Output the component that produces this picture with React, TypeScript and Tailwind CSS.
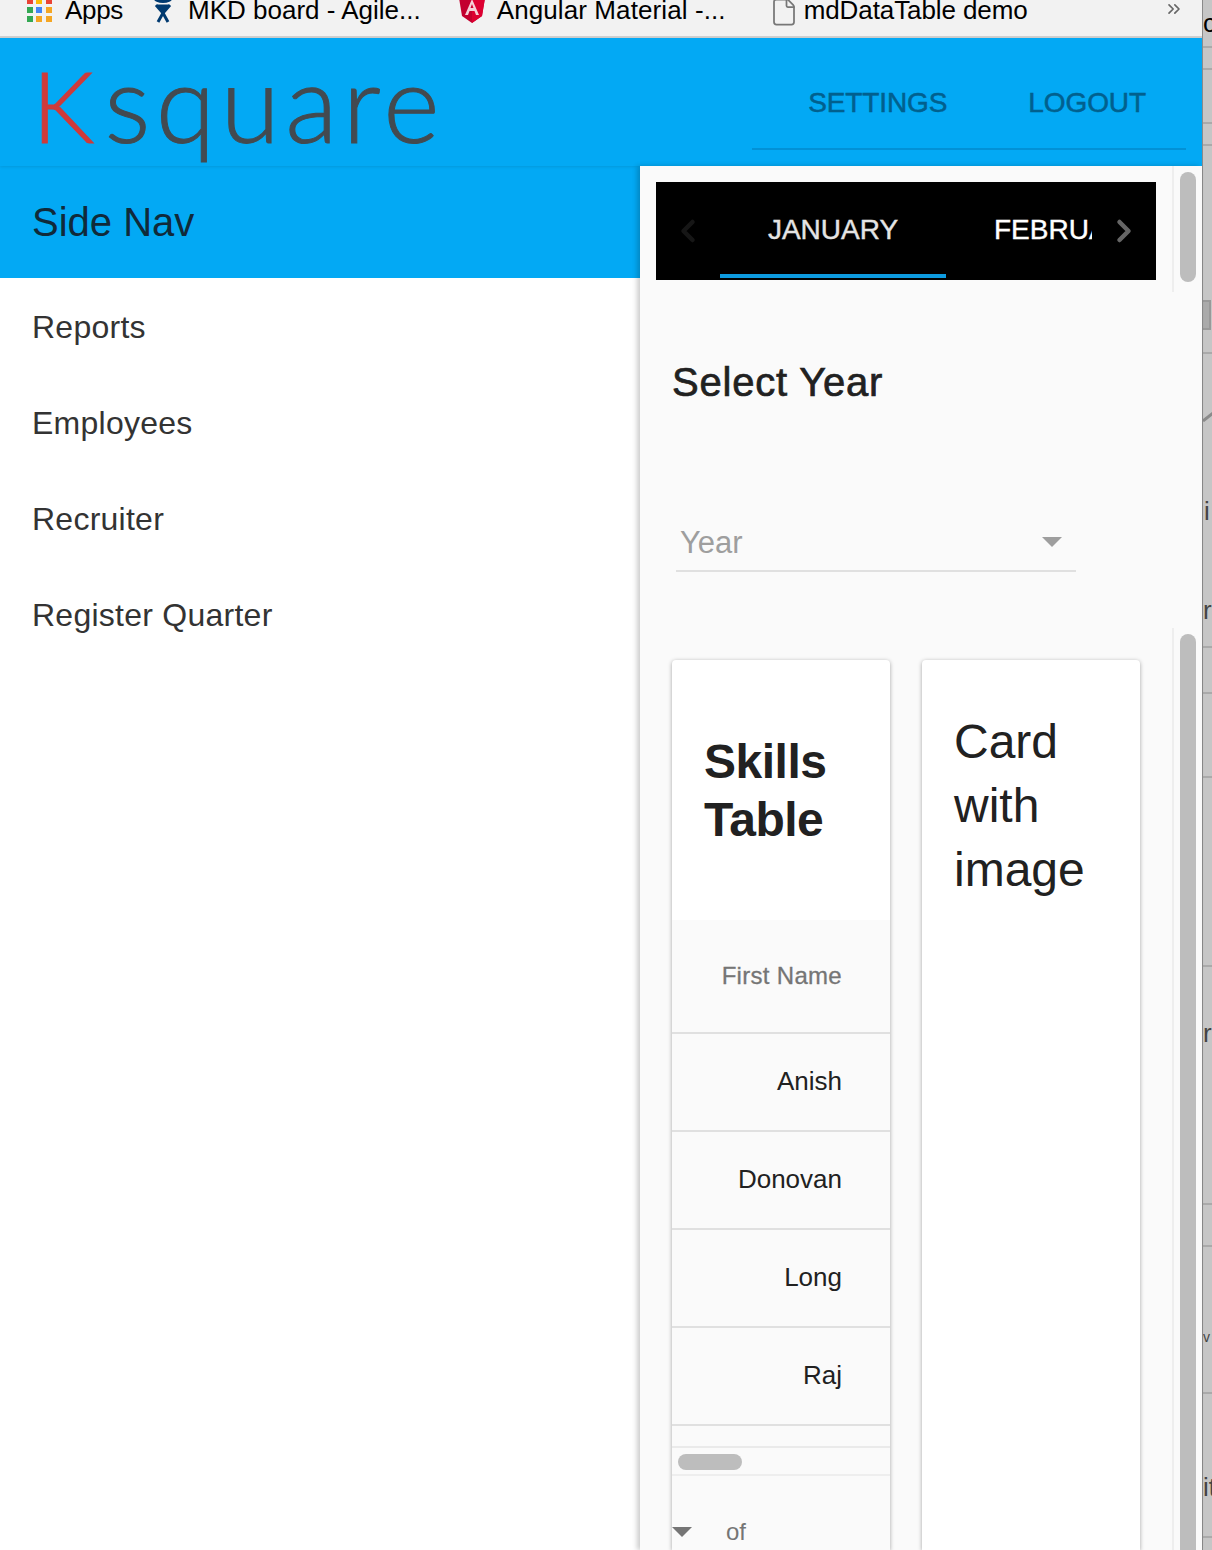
import { ChevronLeft, ChevronRight, ChevronsRight, File } from 'lucide-react';

const SANS = "font-['Liberation_Sans',Arial,sans-serif]";

const NAV_ITEMS = ['Reports', 'Employees', 'Recruiter', 'Register Quarter'];
const ROWS = ['Anish', 'Donovan', 'Long', 'Raj'];

const APP_DOTS = [
  'bg-[#ea4335]', 'bg-[#fbbc05]', 'bg-[#ea4335]',
  'bg-[#34a853]', 'bg-[#4285f4]', 'bg-[#f5a623]',
  'bg-[#34a853]', 'bg-[#f5a623]', 'bg-[#f5a623]',
];

function BookmarksBar() {
  return (
    <div className="relative flex h-[38px] items-center overflow-hidden border-b-2 border-[#d0d0d0] bg-[#f2f2f2] text-[26px] text-black">
      <div className="ml-[27px] mt-[-17px] grid w-[25px] grid-cols-3 gap-[3px]">
        {APP_DOTS.map((c, i) => (
          <div key={i} className={`h-[6px] w-[6px] ${c}`} />
        ))}
      </div>
      <span className="ml-[13px] mt-[-16px] leading-none tracking-[-0.3px]">Apps</span>
      <svg className="ml-[29px] mt-[-14px] h-[26px] w-[22px]" viewBox="0 0 22 26">
        <ellipse cx="11" cy="1" rx="9" ry="4" fill="#003a70" />
        <path d="M4 7 L11 15 L6 24 M18 7 L11 15 L16 24 M8 8 H14 L11 12 Z" fill="none" stroke="#003a70" strokeWidth="3" />
      </svg>
      <span className="ml-[14px] mt-[-16px] leading-none">MKD board - Agile...</span>
      <svg className="ml-[37px] mt-[-16px] h-[25px] w-[28px]" viewBox="0 0 28 25">
        <path d="M1 0 H27 L24 18 L14 25 L4 18 Z" fill="#c3002f" />
        <path d="M14 0 H27 L24 18 L14 25 Z" fill="#dd0031" />
        <path d="M14 1 L7 17 H10 L11.5 13 H16.5 L18 17 H21 Z M12.5 10 L14 6 L15.5 10 Z" fill="#f5d0d8" />
      </svg>
      <span className="ml-[11px] mt-[-16px] leading-none tracking-[0.1px]">Angular Material -...</span>
      <File className="ml-[43px] mt-[-12px] h-[30px] w-[30px] shrink-0 text-[#777]" strokeWidth={1.4} />
      <span className="ml-[5px] mt-[-16px] leading-none tracking-[-0.1px]">mdDataTable demo</span>
      <ChevronsRight className="ml-[136px] mt-[-18px] h-[20px] w-[20px] shrink-0 text-[#666]" strokeWidth={2} />
    </div>
  );
}

function Header() {
  return (
    <header className="relative flex h-[128px] items-start justify-between bg-[#03a9f4] shadow-[0_1px_3px_rgba(0,0,0,0.1)]">
      <div className="ml-[32px] mt-[-7px] flex items-baseline font-['Lato',sans-serif] text-[108px] font-light leading-[140px] tracking-[5.3px] text-[#434a50] [-webkit-text-stroke:1px]">
        <span className="text-[98px] text-[#cf3a3a]">K</span>
        <span className="ml-[5px]">square</span>
      </div>
      <div className="mr-[16px] flex h-[112px] w-[434px] items-center justify-end gap-[81px] border-b-2 border-[#0291d6] pr-[40px] pt-[20px] text-[28px] tracking-[-0.1px] text-[#01608e] [-webkit-text-stroke:0.5px]">
        <span>SETTINGS</span>
        <span>LOGOUT</span>
      </div>
    </header>
  );
}

function SideNav() {
  return (
    <aside className="w-[640px] shrink-0 bg-white">
      <div className="flex h-[112px] items-center bg-[#03a9f4] pl-[32px] text-[40px] text-[#102a3a]">Side Nav</div>
      <nav className="text-[32px] tracking-[0.25px] text-[#333]">
        {NAV_ITEMS.map((item) => (
          <div key={item} className="flex h-[96px] items-center pl-[32px] pt-[2px]">
            {item}
          </div>
        ))}
      </nav>
    </aside>
  );
}

function Tabs() {
  return (
    <div className="flex h-[98px] w-[500px] items-stretch bg-black text-[28px] text-white [-webkit-text-stroke:0.4px]">
      <div className="flex w-[64px] items-center justify-center">
        <ChevronLeft className="h-[36px] w-[36px] text-[#161616]" strokeWidth={3} />
      </div>
      <div className="mb-[2px] flex w-[226px] items-center justify-center border-b-4 border-[#0d9be0] pt-[4px] text-[#e4e4e4]">JANUARY</div>
      <div className="w-[146px] overflow-hidden whitespace-nowrap pl-[48px] pt-[32px] leading-[32px]">FEBRUARY</div>
      <div className="flex w-[64px] items-center justify-center">
        <ChevronRight className="h-[36px] w-[36px] text-[#666]" strokeWidth={3} />
      </div>
    </div>
  );
}

function SkillsCard() {
  return (
    <div className="w-[218px] rounded-t-[4px] bg-white shadow-[0_1px_4px_rgba(0,0,0,0.35)]">
      <h2 className="h-[260px] pl-[32px] pt-[73px] text-[48px] font-bold leading-[58px] tracking-[-0.5px] text-[#212121]">
        Skills
        <br />
        Table
      </h2>
      <div className="bg-[#fafafa]">
        <div className="flex h-[114px] items-center justify-end border-b-2 border-[#e0e0e0] pr-[48px] text-[24px] tracking-[0.3px] text-[#757575] [-webkit-text-stroke:0.3px]">First Name</div>
        {ROWS.map((name) => (
          <div key={name} className="flex h-[98px] items-center justify-end border-b-2 border-[#e0e0e0] pb-[2px] pr-[48px] text-[26px] text-[#212121]">
            {name}
          </div>
        ))}
        <div className="h-[22px] border-b-2 border-[#eaeaea]" />
        <div className="flex h-[28px] items-center border-b-2 border-[#eeeeee] pl-[6px] pt-[2px]">
          <div className="h-[16px] w-[64px] rounded-full bg-[#bdbdbd]" />
        </div>
        <div className="flex h-[75px] items-start pt-[42px]">
          <div className="mt-[9px] h-0 w-0 border-x-[10px] border-t-[10px] border-x-transparent border-t-[#757575]" />
          <span className="ml-[34px] text-[24px] leading-[28px] text-[#757575]">of</span>
        </div>
      </div>
    </div>
  );
}

function ImageCard() {
  return (
    <div className="w-[218px] rounded-t-[4px] bg-white pl-[32px] pt-[50px] text-[48px] leading-[64px] text-[#212121] shadow-[0_1px_4px_rgba(0,0,0,0.35)]">
      Card
      <br />
      with
      <br />
      image
    </div>
  );
}

function ScrollTrack({ thumb }: { thumb: string }) {
  return (
    <div className="w-[30px] shrink-0 border-l-2 border-[#eeeeee] pl-[6px] pt-[6px]">
      <div className={`w-[16px] rounded-t-full bg-[#bdbdbd] ${thumb}`} />
    </div>
  );
}

function MainPanel() {
  return (
    <main className="relative z-10 h-[1384px] w-[562px] shrink-0 overflow-hidden bg-[#fafafa] shadow-[-3px_0_5px_rgba(0,0,0,0.2)]">
      <div className="flex h-[126px]">
        <div className="flex-1 pl-[16px] pt-[16px]">
          <Tabs />
        </div>
        <ScrollTrack thumb="h-[110px] rounded-b-full" />
      </div>
      <div className="h-[336px] pl-[32px]">
        <h1 className="pt-[66px] text-[40px] leading-[48px] tracking-[0.8px] text-[#212121] [-webkit-text-stroke:0.7px]">Select Year</h1>
        <div className="ml-[4px] mt-[113px] flex h-[53px] w-[400px] items-center justify-between border-b-2 border-[#e0e0e0] pb-[2px] pl-[4px] pr-[14px] text-[31px] text-[#9e9e9e]">
          <span>Year</span>
          <div className="mb-[3px] h-0 w-0 border-x-[10px] border-t-[10px] border-x-transparent border-t-[#9e9e9e]" />
        </div>
      </div>
      <div className="flex h-[922px]">
        <div className="flex flex-1 items-stretch gap-[32px] pl-[32px] pt-[32px]">
          <SkillsCard />
          <ImageCard />
        </div>
        <ScrollTrack thumb="h-[916px]" />
      </div>
    </main>
  );
}

// what shows of the page behind the window, cut off at the window edge
const BEHIND_LINES = [
  'top-[46px]', 'top-[68px]', 'top-[122px]', 'top-[144px]', 'top-[352px]', 'top-[646px]',
  'top-[692px]', 'top-[776px]', 'top-[965px]', 'top-[1203px]', 'top-[1245px]', 'top-[1392px]', 'top-[1536px]',
];

function BehindStrip() {
  return (
    <div className="relative h-[1550px] w-[10px] shrink-0 overflow-hidden border-l border-[#8a8a8a] bg-[#c6c6c6] text-[26px] leading-none text-[#444]">
      {BEHIND_LINES.map((t) => (
        <div key={t} className={`absolute left-0 h-[2px] w-full bg-[#aaaaaa] ${t}`} />
      ))}
      <span className="absolute left-0 top-[10px] font-medium text-black">c</span>
      <div className="absolute left-0 top-[300px] h-[30px] w-[8px] border-2 border-l-0 border-[#999] bg-[#aaa]" />
      <svg className="absolute left-0 top-[408px] h-[14px] w-[10px]" viewBox="0 0 10 14">
        <path d="M0 13 L10 5" stroke="#8a8a8a" strokeWidth="3" fill="none" />
      </svg>
      <span className="absolute left-[1px] top-[498px]">i</span>
      <span className="absolute left-0 top-[597px]">r</span>
      <span className="absolute left-0 top-[1020px]">r</span>
      <span className="absolute left-0 top-[1330px] text-[14px]">v</span>
      <span className="absolute left-0 top-[1474px]">it</span>
    </div>
  );
}

export default function App() {
  return (
    <div className={`flex h-[1550px] w-[1212px] overflow-hidden bg-white ${SANS}`}>
      <div className="w-[1202px] shrink-0">
        <BookmarksBar />
        <Header />
        <div className="flex">
          <SideNav />
          <MainPanel />
        </div>
      </div>
      <BehindStrip />
    </div>
  );
}
